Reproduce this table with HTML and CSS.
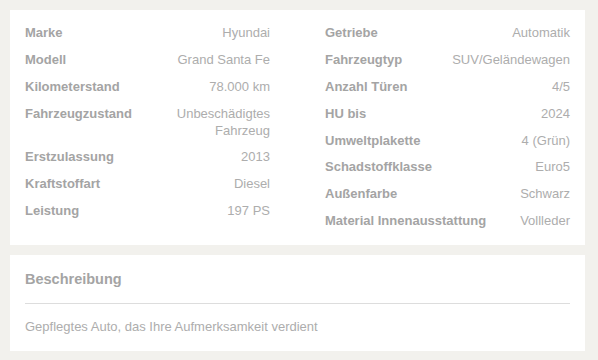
FILE: index.html
```html
<!DOCTYPE html>
<html lang="de">
<head>
    <meta charset="UTF-8">
    <meta name="viewport" content="width=device-width, initial-scale=1.0">
    <title>Fahrzeugdaten</title>
    <link rel="stylesheet" href="styles.css">
</head>
<body>
    <div class="card specs">
        <ul class="spec-list">
            <li><span class="label">Marke</span><span class="value">Hyundai</span></li>
            <li><span class="label">Modell</span><span class="value">Grand Santa Fe</span></li>
            <li><span class="label">Kilometerstand</span><span class="value">78.000 km</span></li>
            <li><span class="label">Fahrzeugzustand</span><span class="value">Unbeschädigtes Fahrzeug</span></li>
            <li><span class="label">Erstzulassung</span><span class="value">2013</span></li>
            <li><span class="label">Kraftstoffart</span><span class="value">Diesel</span></li>
            <li><span class="label">Leistung</span><span class="value">197 PS</span></li>
        </ul>
        <ul class="spec-list">
            <li><span class="label">Getriebe</span><span class="value">Automatik</span></li>
            <li><span class="label">Fahrzeugtyp</span><span class="value">SUV/Geländewagen</span></li>
            <li><span class="label">Anzahl Türen</span><span class="value">4/5</span></li>
            <li><span class="label">HU bis</span><span class="value">2024</span></li>
            <li><span class="label">Umweltplakette</span><span class="value">4 (Grün)</span></li>
            <li><span class="label">Schadstoffklasse</span><span class="value">Euro5</span></li>
            <li><span class="label">Außenfarbe</span><span class="value">Schwarz</span></li>
            <li><span class="label">Material Innenausstattung</span><span class="value">Vollleder</span></li>
        </ul>
    </div>

    <div class="card description">
        <h2>Beschreibung</h2>
        <p>Gepflegtes Auto, das Ihre Aufmerksamkeit verdient</p>
    </div>
</body>
</html>
```

FILE: styles.css
```css
body {
    margin: 0;
    padding: 10px 13px 10px 10px;
    background: #f2f1ed;
    font-family: "Liberation Sans", Arial, sans-serif;
    font-size: 13px;
    line-height: 1.3;
    color: #adadad;
}

.card {
    background: #fff;
    padding: 15px;
}

/* two columns of key/value rows */
.specs {
    display: grid;
    grid-template-columns: 1fr 1fr;
    column-gap: 55px;
    margin-bottom: 10px;
}

.spec-list {
    list-style: none;
    margin: 0;
    padding: 0;
    display: flex;
    flex-direction: column;
    gap: 10px;
}

.spec-list li {
    display: flex;
    justify-content: space-between;
    gap: 20px;
}

.label {
    flex: none;
    font-weight: bold;
    color: #a4a4a4;
}

.value {
    text-align: right;
}

.description {
    padding-bottom: 15px;
}

.description h2 {
    margin: 0;
    font-size: 14.5px;
    line-height: 19px;
    color: #a4a4a4;
    padding-bottom: 14px;
    border-bottom: 1px solid #dddddd;
}

.description p {
    margin: 15px 0 0;
}
```
